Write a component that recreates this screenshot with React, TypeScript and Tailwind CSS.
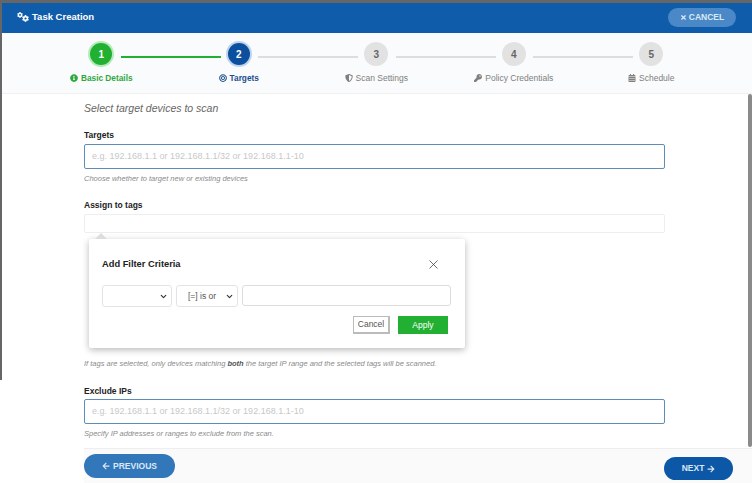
import { X, ChevronDown } from "lucide-react";
import { FaCog, FaShieldAlt, FaKey, FaCalendarAlt, FaInfoCircle, FaBullseye, FaTimes, FaArrowLeft, FaArrowRight } from "react-icons/fa";

const steps = [
  { n: 1, label: "Basic Details", icon: FaInfoCircle, state: "done" },
  { n: 2, label: "Targets", icon: FaBullseye, state: "active" },
  { n: 3, label: "Scan Settings", icon: FaShieldAlt, state: "todo" },
  { n: 4, label: "Policy Credentials", icon: FaKey, state: "todo" },
  { n: 5, label: "Schedule", icon: FaCalendarAlt, state: "todo" },
];

function Stepper() {
  return (
    <div className="h-[61px] bg-[#fafbfc] border-b border-[#f0f0f0] pl-[32.5px] pr-[32px] grid grid-cols-5">
      {steps.map((s, i) => (
        <div key={s.n} className="relative flex flex-col items-center pt-[9px]">
          {i < 4 && (
            <div
              className={
                s.state === "done"
                  ? "absolute left-[88px] top-[23px] w-[100px] h-[2px] bg-[#22b033]"
                  : "absolute left-[88px] top-[23px] w-[100px] h-[2px] bg-[#dddddd]"
              }
            />
          )}
          <div className="w-[24px] h-[24px] flex items-center justify-center">
            <div
              className={
                s.state === "done"
                  ? "w-[22px] h-[22px] rounded-full bg-[#22b033] ring-2 ring-[#b5eab9] text-white text-[10px] font-bold flex items-center justify-center"
                  : s.state === "active"
                    ? "w-[22px] h-[22px] rounded-full bg-[#0c4f9e] ring-2 ring-[#bcd4ee] text-white text-[10px] font-bold flex items-center justify-center"
                    : "w-[24px] h-[24px] rounded-full bg-[#e2e2e2] text-[#666666] text-[10px] font-bold flex items-center justify-center"
              }
            >
              {s.n}
            </div>
          </div>
          <div
            className={
              s.state === "done"
                ? "mt-[6px] flex items-center gap-[3px] text-[8.3px] font-bold text-[#2fa83d]"
                : s.state === "active"
                  ? "mt-[6px] flex items-center gap-[3px] text-[8.3px] font-bold text-[#1c4f8f]"
                  : "mt-[6px] flex items-center gap-[3px] text-[8.5px] text-[#808080]"
            }
          >
            <s.icon className="w-[8px] h-[8px]" />
            {s.label}
          </div>
        </div>
      ))}
    </div>
  );
}

function FilterPopover() {
  return (
    <div className="absolute left-[4px] top-[24px] w-[376px] h-[109px] bg-white rounded-[2px] shadow-[0_2px_7px_rgba(0,0,0,0.28)] pl-[13px] pr-[14px] pt-[19px]">
      <div className="absolute left-[6px] top-[-6px] w-0 h-0 border-x-[6px] border-x-transparent border-b-[6px] border-b-[#dddddd]" />
      <div className="flex items-center justify-between pr-[10px] h-[13px]">
        <span className="text-[9.3px] font-bold text-[#222222]">Add Filter Criteria</span>
        <X className="w-[15px] h-[15px] text-[#444444]" strokeWidth={1.25} />
      </div>
      <div className="mt-[14px] flex gap-[4px]">
        <div className="w-[70px] h-[22px] border border-[#e4e4e4] rounded-[3px] flex items-center justify-end pr-[3px]">
          <ChevronDown className="w-[9px] h-[9px] text-[#333333]" strokeWidth={3} />
        </div>
        <div className="w-[62px] h-[22px] border border-[#e4e4e4] rounded-[3px] flex items-center justify-between pl-[11px] pr-[3px] text-[8.5px] text-[#555555]">
          [=] is or
          <ChevronDown className="w-[9px] h-[9px] text-[#333333]" strokeWidth={3} />
        </div>
        <div className="w-[209px] h-[21px] border border-[#dddddd] rounded-[3px]" />
      </div>
      <div className="mt-[9px] flex justify-end gap-[8px] pr-[3px]">
        <div className="w-[37px] h-[18px] border border-[#bbbbbb] border-b-2 border-r-2 bg-white text-[8.5px] text-[#555555] flex items-center justify-center">
          Cancel
        </div>
        <div className="w-[50px] h-[18px] bg-[#22b033] text-white text-[8.5px] flex items-center justify-center">
          Apply
        </div>
      </div>
    </div>
  );
}

const placeholder = "e.g. 192.168.1.1 or 192.168.1.1/32 or 192.168.1.1-10";

export default function App() {
  return (
    <div className="relative w-[752px] h-[483px] overflow-hidden bg-white font-['Liberation_Sans',Arial,sans-serif]">
      <div className="h-[3px] bg-[#666666]" />
      <div className="absolute left-0 top-0 w-[2px] h-[380px] bg-[#666666]" />
      <header className="h-[30px] bg-[#0f5cab] flex items-center justify-between pl-[17px] pr-[16px] pb-[2px] text-white">
        <div className="flex items-center gap-[3px] text-[9.5px] font-bold">
          <span className="relative w-[12px] h-[10px]">
            <FaCog className="absolute left-0 top-0 w-[6px] h-[6px]" />
            <FaCog className="absolute right-0 bottom-0 w-[7px] h-[7px]" />
          </span>
          Task Creation
        </div>
        <div className="w-[68px] h-[19px] rounded-full bg-[#4a88c7] flex items-center justify-center gap-[2px] text-[8.5px] font-bold text-[#dbe8f5]">
          <FaTimes className="w-[7px] h-[7px]" />
          CANCEL
        </div>
      </header>
      <Stepper />
      <div className="relative h-[354px] pl-[84px] pr-[87px] pt-[8px]">
        <div className="absolute right-0 top-0 w-[4px] h-[353px] bg-[#8a8a8a] rounded-[2px]" />
        <p className="text-[10.5px] italic text-[#666666] leading-[12px]">Select target devices to scan</p>

        <label className="block mt-[16px] text-[8.5px] font-bold text-[#222222] leading-[10px]">Targets</label>
        <div className="mt-[4px] h-[25px] border border-[#5d8db8] rounded-[2px] pl-[7px] flex items-center text-[9px] text-[#c8c8c8]">
          {placeholder}
        </div>
        <p className="mt-[5px] text-[7.5px] italic text-[#8a8a8a] leading-[10px]">Choose whether to target new or existing devices</p>

        <label className="block mt-[16px] text-[8.5px] font-bold text-[#222222] leading-[10px]">Assign to tags</label>
        <div className="relative mt-[4px] h-[19px] border border-[#eeeeee] rounded-[2px]">
          <FilterPopover />
        </div>

        <p className="mt-[126px] text-[7.5px] italic text-[#8a8a8a] leading-[10px]">
          If tags are selected, only devices matching <b className="text-[#555555]">both</b> the target IP range and the selected tags will be scanned.
        </p>

        <label className="block mt-[17px] text-[8.5px] font-bold text-[#222222] leading-[10px]">Exclude IPs</label>
        <div className="mt-[3px] h-[25px] border border-[#5d8db8] rounded-[2px] pl-[7px] flex items-center text-[9px] text-[#c8c8c8]">
          {placeholder}
        </div>
        <p className="mt-[5px] text-[7.5px] italic text-[#8a8a8a] leading-[10px]">Specify IP addresses or ranges to exclude from the scan.</p>
      </div>
      <footer className="ml-[84px] h-[35px] bg-[#fafafa] border-t border-[#eeeeee] pr-[19px] flex justify-between">
        <div className="mt-[5px] w-[91px] h-[24px] rounded-full bg-[#3277ba] text-[#dbe8f5] text-[8.5px] font-bold flex items-center justify-center gap-[3px]">
          <FaArrowLeft className="w-[8px] h-[8px]" />
          PREVIOUS
        </div>
        <div className="mt-[8px] w-[69px] h-[23px] rounded-full bg-[#0c57a6] text-[#dbe8f5] text-[8.5px] font-bold flex items-center justify-center gap-[3px]">
          NEXT
          <FaArrowRight className="w-[8px] h-[8px]" />
        </div>
      </footer>
    </div>
  );
}
